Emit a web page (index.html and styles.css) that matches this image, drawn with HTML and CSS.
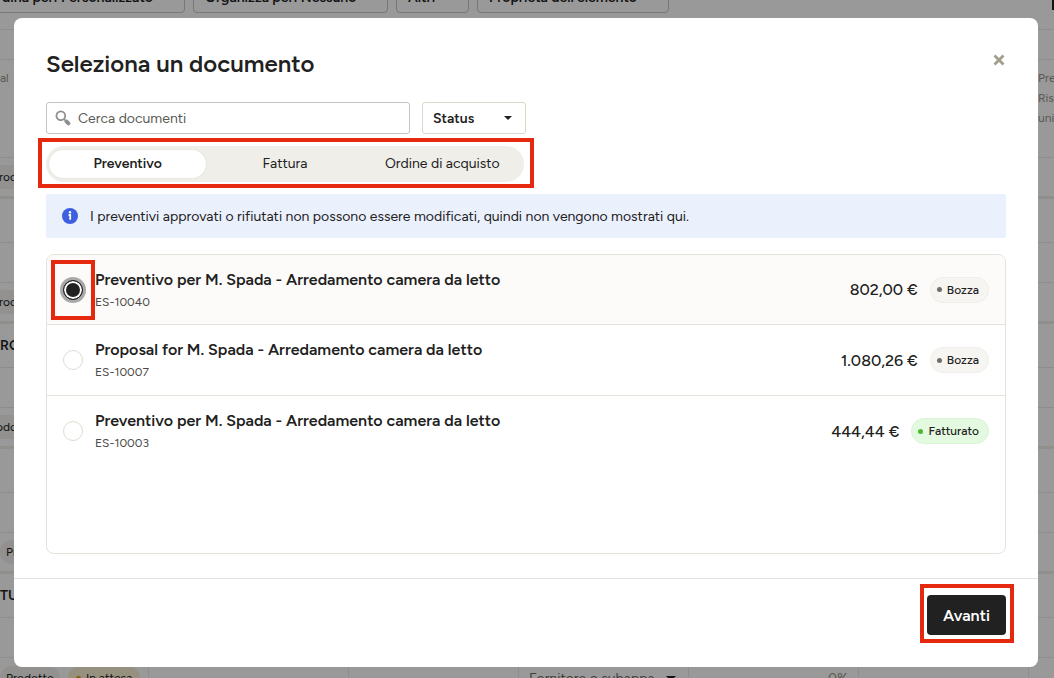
FILE: index.html
```html
<!DOCTYPE html>
<html lang="it">
<head>
    <meta charset="utf-8">
    <title>Seleziona un documento</title>
    <link rel="stylesheet" href="styles.css">
</head>
<body>
    <!-- Page behind the dialog -->
    <div class="page" aria-hidden="true">
        <div class="toolbar">
            <button class="tool tool-order" type="button">Ordina per: Personalizzato</button>
            <button class="tool tool-group" type="button">Organizza per: Nessuno</button>
            <button class="tool tool-filter" type="button">Altri</button>
            <button class="tool tool-props" type="button">Proprietà dell'elemento</button>
            <span class="tool-end"></span>
        </div>
        <div class="strip"></div>
        <div class="row row-head">
            <span>al</span>
            <span class="head-end">Pre<br>Ris<br>uni</span>
        </div>
        <div class="row row-chips"><span class="chip chip-cut">Prodotto</span></div>
        <div class="row row-title"></div>
        <div class="row row-empty"></div>
        <div class="row row-chips"><span class="chip chip-cut">Prodotto</span></div>
        <div class="row row-title">RO</div>
        <div class="row row-empty"></div>
        <div class="row row-chips"><span class="chip chip-cut-more">Prodotto</span></div>
        <div class="row row-title"></div>
        <div class="row row-empty"></div>
        <div class="row row-chips"><span class="chip">Prodotto</span></div>
        <div class="row row-title">TU</div>
        <div class="row row-empty"></div>
        <div class="row row-cells">
            <div class="cell cell-first">
                <span class="chip">Prodotto</span>
                <span class="chip chip-wait"><i class="dot"></i>In attesa</span>
            </div>
            <div class="cell cell-wide"></div>
            <div class="cell"></div>
            <div class="cell cell-supplier">Fornitore o subappa <i class="caret"></i></div>
            <div class="cell cell-percent">0%</div>
            <div class="cell"></div>
            <div class="cell cell-last"></div>
        </div>
    </div>

    <div class="backdrop">
        <div class="modal" role="dialog" aria-labelledby="modal-title">
            <div class="modal-body">
                <div class="modal-header">
                    <h1 id="modal-title">Seleziona un documento</h1>
                    <button class="close" type="button" aria-label="Chiudi">
                        <svg width="12" height="12" viewBox="0 0 12 12"><path d="M1.5 1.5l9 9M10.5 1.5l-9 9" stroke="#a19e8b" stroke-width="2.8" fill="none"/></svg>
                    </button>
                </div>

                <div class="filters">
                    <label class="search">
                        <svg width="16" height="16" viewBox="0 0 16 16" fill="none" stroke="#8e8e8e">
                            <circle cx="5.8" cy="5.8" r="4.4" stroke-width="1.7"/>
                            <path d="M9 9l2 2" stroke-width="1.6"/>
                            <path d="M11.4 11.4l2 2" stroke-width="3.8" stroke-linecap="round"/>
                        </svg>
                        <input type="text" placeholder="Cerca documenti" aria-label="Cerca documenti">
                    </label>
                    <div class="status">
                        <select aria-label="Status">
                            <option>Status</option>
                        </select>
                    </div>
                </div>

                <div class="tabs marked marked-tabs" role="tablist">
                    <button class="tab active" type="button" role="tab" aria-selected="true">Preventivo</button>
                    <button class="tab" type="button" role="tab" aria-selected="false">Fattura</button>
                    <button class="tab" type="button" role="tab" aria-selected="false">Ordine di acquisto</button>
                </div>

                <div class="info">
                    <svg width="16" height="16" viewBox="0 0 16 16">
                        <circle cx="8" cy="8" r="8" fill="#3d5fe0"/>
                        <circle cx="8" cy="4.3" r="1.2" fill="#fff"/>
                        <path d="M6.6 7h1.6v4.8" stroke="#fff" stroke-width="1.8" fill="none"/>
                    </svg>
                    <p>I preventivi approvati o rifiutati non possono essere modificati, quindi non vengono mostrati qui.</p>
                </div>

                <div class="documents">
                    <label class="document selected">
                        <span class="pick marked marked-pick"><input type="radio" name="document" checked></span>
                        <span class="document-text">
                            <span class="document-name">Preventivo per M. Spada - Arredamento camera da letto</span>
                            <span class="document-code">ES-10040</span>
                        </span>
                        <span class="amount">802,00 €</span>
                        <span class="badge"><i class="dot"></i>Bozza</span>
                    </label>
                    <label class="document">
                        <span class="pick"><input type="radio" name="document"></span>
                        <span class="document-text">
                            <span class="document-name">Proposal for M. Spada - Arredamento camera da letto</span>
                            <span class="document-code">ES-10007</span>
                        </span>
                        <span class="amount">1.080,26 €</span>
                        <span class="badge"><i class="dot"></i>Bozza</span>
                    </label>
                    <label class="document">
                        <span class="pick"><input type="radio" name="document"></span>
                        <span class="document-text">
                            <span class="document-name">Preventivo per M. Spada - Arredamento camera da letto</span>
                            <span class="document-code">ES-10003</span>
                        </span>
                        <span class="amount">444,44 €</span>
                        <span class="badge badge-green"><i class="dot"></i>Fatturato</span>
                    </label>
                </div>
            </div>

            <div class="modal-footer">
                <div class="marked marked-next">
                    <button class="next" type="button">Avanti</button>
                </div>
            </div>
        </div>
    </div>
</body>
</html>
```
FILE: styles.css
```css
* {
    box-sizing: border-box;
}
body {
    margin: 0;
    height: 100vh;
    overflow: hidden;
    font-family: Figtree, Inter, "Liberation Sans", sans-serif;
    font-size: 14px;
    color: #212121;
    background-color: white;
}
button, input, select {
    font: inherit;
    color: inherit;
}

/* Page behind the dialog */
.page {
    height: 100vh;
    overflow: hidden;
}
.toolbar {
    display: flex;
    align-items: flex-start;
    gap: 8px;
    height: 30px;
    border-bottom: 1px solid #ecebe8;
}
.tool {
    height: 32px;
    margin-top: -19px;
    padding: 0 11px;
    border: 1px solid #c9c8c4;
    border-radius: 4px;
    background-color: transparent;
    font-weight: 600;
    text-align: left;
    white-space: nowrap;
}
.tool-order {
    display: flex;
    align-items: center;
    justify-content: flex-end;
    width: 195px;
    margin-left: -10px;
    padding-right: 31px;
}
.tool-group {
    width: 195px;
}
.tool-filter {
    width: 73px;
}
.tool-props {
    width: 192px;
}
.tool-end {
    width: 2px;
    height: 10px;
    margin-left: auto;
    background-color: #212121;
}
.strip {
    height: 30px;
    border-bottom: 1px solid #ecebe8;
}
.row {
    display: flex;
    align-items: center;
    border-bottom: 1px solid #ecebe8;
}
.row-head {
    height: 98px;
    align-items: flex-start;
    justify-content: space-between;
    padding-top: 8px;
    color: #98958c;
    font-size: 12px;
    line-height: 20px;
}
.head-end {
    width: 16px;
}
.row-chips {
    height: 41px;
    border-bottom: 3px solid #efeeea;
}
.row-title {
    height: 44px;
    font-weight: 600;
}
.row-empty {
    height: 40px;
}
.row-cells {
    height: 41px;
}
.chip {
    display: flex;
    align-items: center;
    gap: 5px;
    height: 24px;
    padding: 0 6px;
    border-radius: 12px;
    background-color: #f3f2ee;
    font-size: 12px;
}
.chip-cut {
    margin-left: -14px;
}
.chip-cut-more {
    margin-left: -21px;
}
.chip-wait {
    padding: 0 8px;
    background-color: #fbf0d2;
}
.chip-wait .dot {
    background-color: #dd9c15;
}
.cell {
    display: flex;
    align-items: center;
    width: 170px;
    height: 100%;
    border-right: 1px solid #ecebe8;
}
.cell-first {
    width: 149px;
    gap: 8px;
}
.cell-wide {
    width: 200px;
}
.cell-supplier {
    justify-content: space-between;
    padding: 0 12px 0 10px;
    color: #6e6c66;
    white-space: nowrap;
}
.cell-percent {
    justify-content: flex-end;
    padding-right: 10px;
    color: #98958c;
}
.cell-last {
    flex: 1;
    border-right: 0;
}
.caret {
    border: 5px solid transparent;
    border-top-color: #212121;
    border-bottom: 0;
}

/* Dialog */
.backdrop {
    position: fixed;
    inset: 0;
    display: flex;
    padding: 18px 16px 11px 14px;
    background-color: rgba(0, 0, 0, 0.4);
}
.modal {
    flex: 1;
    display: flex;
    flex-direction: column;
    border-radius: 8px;
    background-color: white;
}
.modal-body {
    flex: 1;
    display: flex;
    flex-direction: column;
    padding: 32px 32px 24px;
}
.modal-header {
    display: flex;
    justify-content: space-between;
    align-items: flex-start;
    margin-bottom: 24px;
}
h1 {
    margin: 0;
    font-size: 24px;
    line-height: 28px;
    font-weight: 600;
}
.close {
    display: flex;
    padding: 4px 1px;
    border: 0;
    background: none;
    cursor: pointer;
}
.filters {
    display: flex;
    gap: 12px;
    margin-bottom: 12px;
}
.search {
    display: flex;
    align-items: center;
    gap: 7px;
    width: 364px;
    height: 32px;
    padding: 0 9px 0 8px;
    border: 1px solid #c4c4c4;
    border-radius: 3px;
}
.search input {
    flex: 1;
    padding: 0;
    border: 0;
    outline: 0;
    background: none;
}
.search input::placeholder {
    color: #5a5a55;
    opacity: 1;
}
.status {
    position: relative;
    width: 104px;
}
.status select {
    width: 100%;
    height: 32px;
    padding: 0 10px;
    border: 1px solid #dad7cb;
    border-radius: 3px;
    background-color: white;
    font-weight: 600;
    appearance: none;
}
.status::after {
    content: "";
    position: absolute;
    top: 14px;
    right: 14px;
    border: 4px solid transparent;
    border-top-color: #212121;
    border-bottom: 0;
    pointer-events: none;
}
.tabs {
    display: grid;
    grid-template-columns: repeat(3, 1fr);
    align-self: flex-start;
    width: 478px;
    height: 36px;
    margin-bottom: 12px;
    padding: 4px 3px;
    border-radius: 18px;
    background-color: #efeee9;
}
.tab {
    padding: 0 0 2px;
    border: 0;
    border-radius: 14px;
    background: none;
    cursor: pointer;
}
.tab.active {
    background-color: white;
    font-weight: 600;
    box-shadow: 0 0 2px rgba(0, 0, 0, 0.1);
}
.info {
    display: flex;
    align-items: center;
    gap: 12px;
    height: 44px;
    margin-bottom: 16px;
    padding: 0 16px;
    border-radius: 2px;
    background-color: #ebf0fd;
}
.info p {
    margin: 0;
}

/* Document list */
.documents {
    flex: 1;
    border: 1px solid #e4e2da;
    border-radius: 8px;
    overflow: hidden;
}
.document {
    display: flex;
    align-items: center;
    height: 71px;
    padding: 0 16px;
    border-bottom: 1px solid #e4e2da;
}
.document:last-child {
    border-bottom-color: transparent;
}
.document.selected {
    height: 70px;
    background-color: #fcfbf9;
}
.pick {
    display: flex;
    margin-right: 12px;
}
.pick input {
    width: 20px;
    height: 20px;
    margin: 0;
    border: 1px solid #dedbd0;
    border-radius: 50%;
    background-color: white;
    appearance: none;
}
.pick input:checked {
    border: 1px solid #212121;
    background-color: #212121;
    box-shadow: inset 0 0 0 2px white, 0 0 0 3px #a9a9a9;
}
.document-text {
    flex: 1;
    display: flex;
    flex-direction: column;
}
.document-name {
    font-size: 16px;
    line-height: 24px;
    font-weight: 600;
}
.document-code {
    font-size: 12px;
    line-height: 20px;
    color: #4a4a47;
}
.amount {
    margin-right: 12px;
    font-size: 16px;
    font-weight: 500;
}
.badge {
    display: flex;
    align-items: center;
    gap: 5px;
    height: 26px;
    padding: 0 9px 0 6px;
    border: 1px solid #f0eeea;
    border-radius: 13px;
    background-color: #f7f5f2;
    font-size: 12px;
    font-weight: 500;
}
.badge-green {
    border-color: #d9f5d5;
    background-color: #e3fae0;
}
.dot {
    width: 5px;
    height: 5px;
    border-radius: 50%;
    background-color: #6f6f6c;
}
.badge-green .dot {
    background-color: #4cba2c;
}

.modal-footer {
    display: flex;
    justify-content: flex-end;
    padding: 16px 32px 32px;
    border-top: 1px solid #e4e2dd;
}
.next {
    display: block;
    width: 79px;
    height: 40px;
    border: 0;
    border-radius: 4px;
    background-color: #212121;
    color: white;
    font-size: 16px;
    font-weight: 600;
    cursor: pointer;
}

/* Red frames around the steps to follow */
.marked {
    position: relative;
}
.marked::after {
    content: "";
    position: absolute;
    border: 4px solid #e5290f;
    pointer-events: none;
}
.marked-tabs::after {
    inset: -8px -10px -6px -8px;
}
.marked-pick::after {
    inset: -20px -12px;
}
.marked-next::after {
    inset: -11px -8px -8px -7px;
}
```
